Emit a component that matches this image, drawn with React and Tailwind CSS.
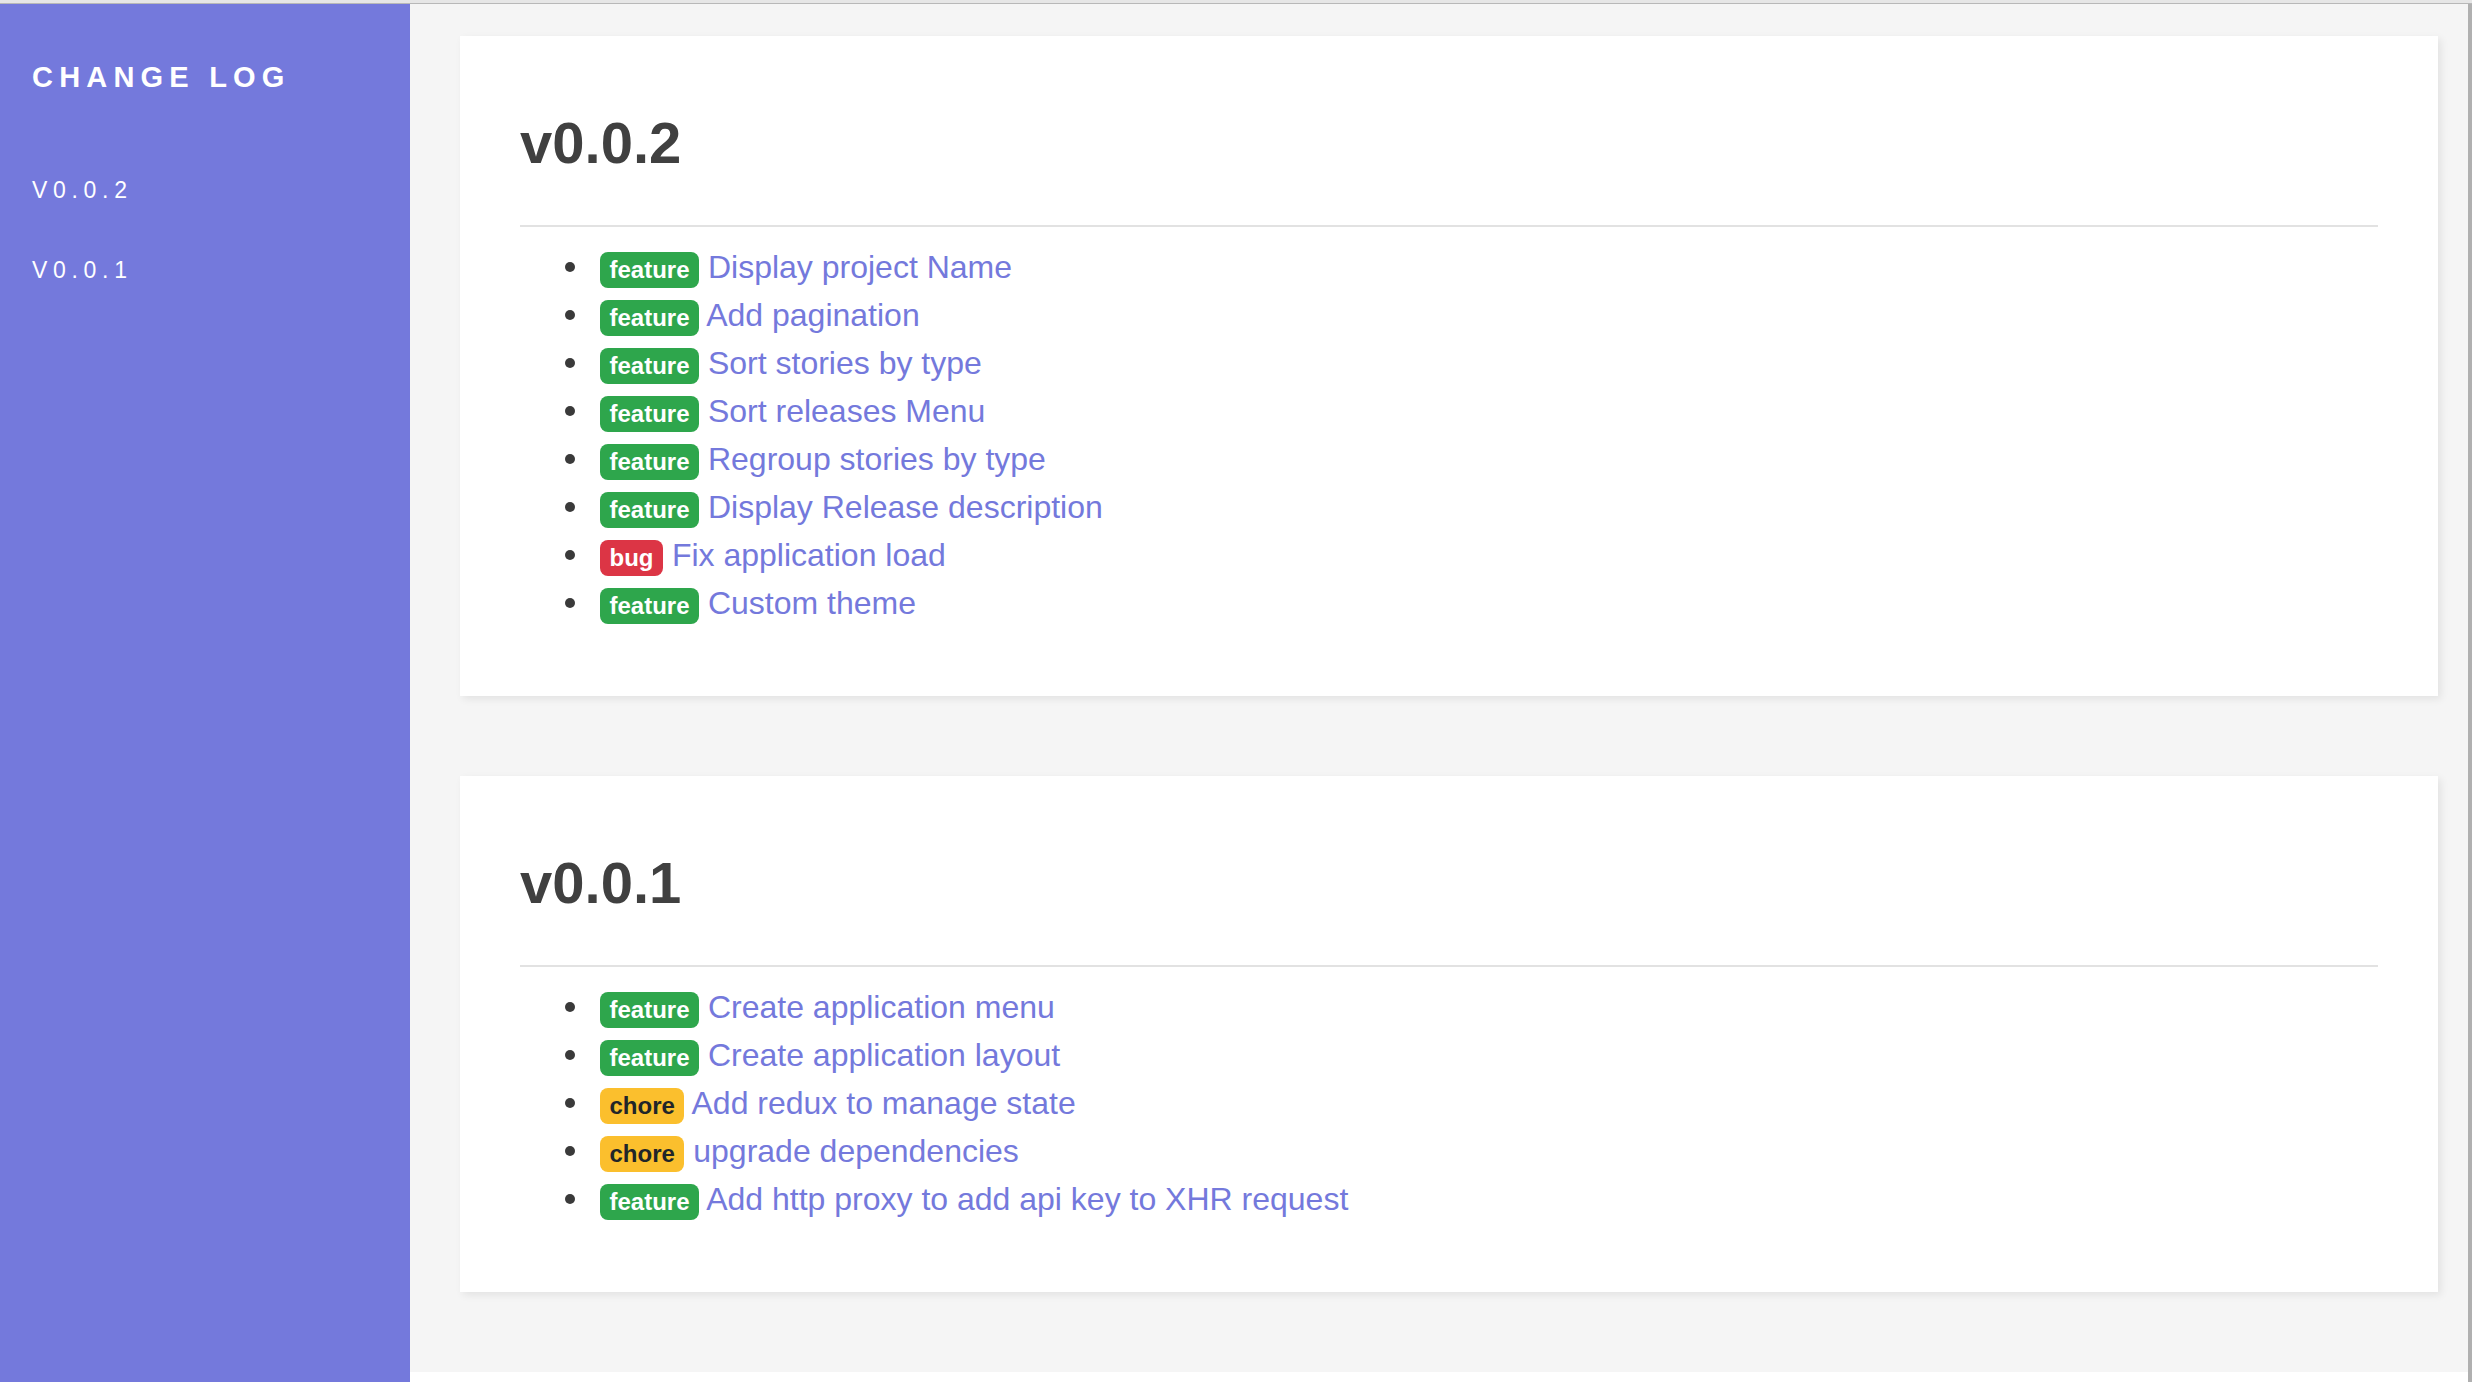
const releases = [
  {
    version: "v0.0.2",
    stories: [
      { type: "feature", title: "Display project Name" },
      { type: "feature", title: "Add pagination" },
      { type: "feature", title: "Sort stories by type" },
      { type: "feature", title: "Sort releases Menu" },
      { type: "feature", title: "Regroup stories by type" },
      { type: "feature", title: "Display Release description" },
      { type: "bug", title: "Fix application load" },
      { type: "feature", title: "Custom theme" },
    ],
  },
  {
    version: "v0.0.1",
    stories: [
      { type: "feature", title: "Create application menu" },
      { type: "feature", title: "Create application layout" },
      { type: "chore", title: "Add redux to manage state" },
      { type: "chore", title: "upgrade dependencies" },
      { type: "feature", title: "Add http proxy to add api key to XHR request" },
    ],
  },
];

const badgeColors = {
  feature: "bg-[#2ea64c] text-white",
  bug: "bg-[#dc3545] text-white",
  chore: "bg-[#fbbf2d] text-[#212529]",
};

function Badge({ type }) {
  return (
    <span
      className={`inline-block align-baseline rounded-[8px] px-[9.5px] py-[6px] text-[24px] leading-[24px] font-bold ${badgeColors[type]}`}
    >
      {type}
    </span>
  );
}

function ReleaseCard({ release }) {
  return (
    <section className="bg-white pt-[72px] pb-[69px] px-[60px] shadow-[3px_3px_8px_rgba(0,0,0,0.08)]">
      <h2 className="text-[58px] leading-[70px] font-semibold text-[#404040]">
        {release.version}
      </h2>
      <div className="mt-[47px] h-[2px] bg-[#e2e2e2]"></div>
      <ul className="mt-[16px] pl-[80px]">
        {release.stories.map((story, i) => (
          <li
            key={i}
            className="relative text-[32px] leading-[48px] text-[#7479dc] before:content-[''] before:absolute before:left-[-35px] before:top-[19px] before:w-[10px] before:h-[10px] before:rounded-full before:bg-[#3a3a3a]"
          >
            <Badge type={story.type} />{" "}
            <a href="#" className="text-[#7479dc]">
              {story.title}
            </a>
          </li>
        ))}
      </ul>
    </section>
  );
}

export default function App() {
  return (
    <div
      className="h-[1382px] flex flex-col bg-white overflow-hidden"
      style={{ fontFamily: '"Liberation Sans", Arial, sans-serif' }}
    >
      {/* window top edge */}
      <div className="h-[3px] bg-[#e6e6e6]"></div>
      <div className="h-[1px] bg-[#b8b8b8]"></div>

      <div className="flex flex-1 min-h-0">
        {/* Sidebar */}
        <aside className="w-[410px] shrink-0 bg-[#7479dc] text-white pl-[32px] pt-[59px]">
          <h1 className="text-[29px] leading-[29px] font-bold tracking-[6.2px]">
            CHANGE LOG
          </h1>
          <nav className="mt-[87px] flex flex-col gap-[57px]">
            {releases.map((r) => (
              <a
                key={r.version}
                href="#"
                className="text-[23px] leading-[23px] tracking-[5.7px] uppercase"
              >
                {r.version.toUpperCase()}
              </a>
            ))}
          </nav>
        </aside>

        {/* Main */}
        <main className="flex-1 flex flex-col bg-[#f5f5f5] border-r-[4px] border-[#b0b0b0]">
          <div className="flex-1 pt-[32px] pl-[50px] pr-[30px] flex flex-col gap-[80px]">
            {releases.map((r) => (
              <ReleaseCard key={r.version} release={r} />
            ))}
          </div>
          <div className="h-[10px] bg-white"></div>
        </main>
      </div>
    </div>
  );
}
